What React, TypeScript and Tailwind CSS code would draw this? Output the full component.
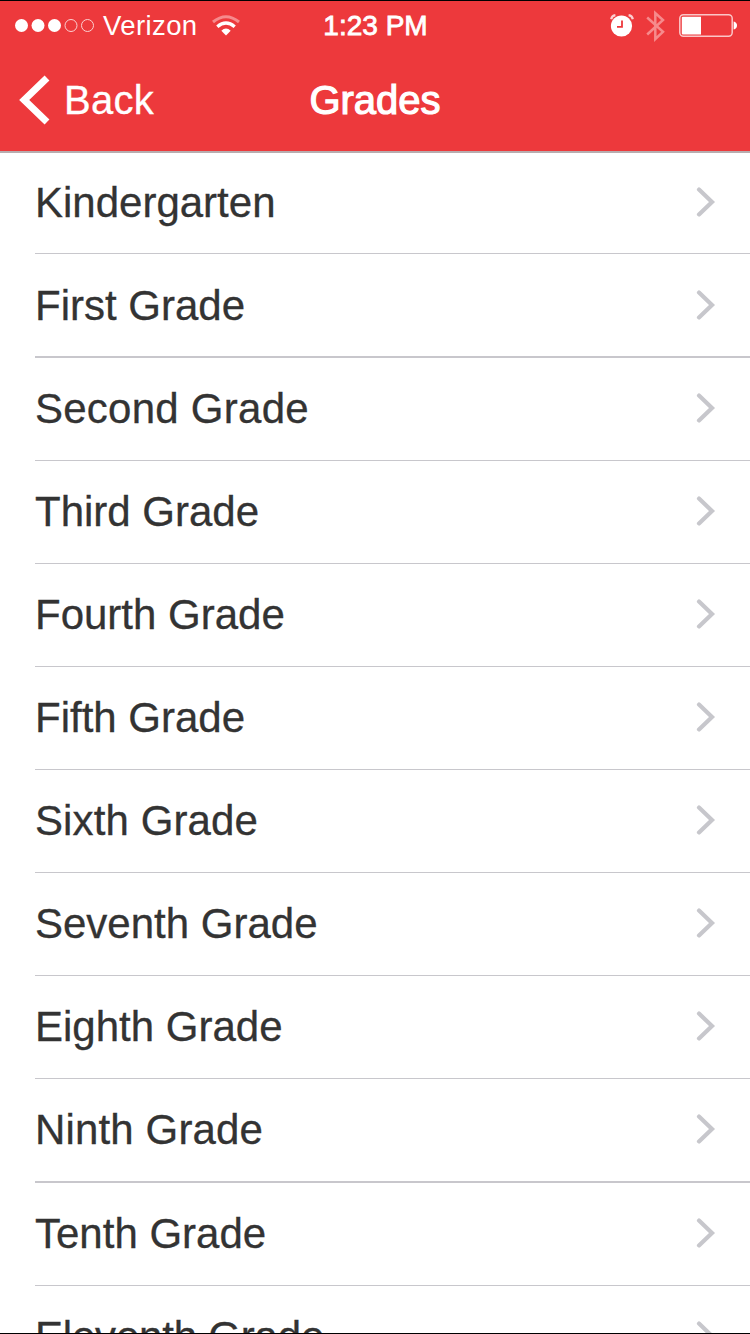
const grades = [
    { name: "Kindergarten", row: "h-[101px] border-b", text: "" },
    { name: "First Grade", row: "h-[104px] border-b-2 pt-px", text: "" },
    { name: "Second Grade", row: "h-[103px] border-b", text: "tracking-[0.25px]" },
    { name: "Third Grade", row: "h-[103px] border-b", text: "" },
    { name: "Fourth Grade", row: "h-[103px] border-b", text: "" },
    { name: "Fifth Grade", row: "h-[103px] border-b", text: "" },
    { name: "Sixth Grade", row: "h-[103px] border-b", text: "tracking-[0.1px]" },
    { name: "Seventh Grade", row: "h-[103px] border-b", text: "" },
    { name: "Eighth Grade", row: "h-[103px] border-b", text: "" },
    { name: "Ninth Grade", row: "h-[104px] border-b-2", text: "tracking-[0.15px]" },
    { name: "Tenth Grade", row: "h-[103px] border-b", text: "" },
    { name: "Eleventh Grade", row: "h-[103px] border-b", text: "tracking-[-0.2px]" },
]

const Signal = () => (
    <svg className="ml-[15px]" width="80" height="14" viewBox="0 0 80 14" fill="none">
        <circle cx="6.5" cy="6.5" r="6.5" fill="#fff" />
        <circle cx="23" cy="6.5" r="6.5" fill="#fff" />
        <circle cx="39.5" cy="6.5" r="6.5" fill="#fff" />
        <circle cx="56" cy="6.5" r="6" stroke="#fbd0d1" />
        <circle cx="72.5" cy="6.5" r="6" stroke="#fbd0d1" />
    </svg>
)

const Wifi = () => (
    <svg className="ml-[14px]" width="28" height="22" viewBox="0 0 28 22" fill="none">
        <path d="M1 7 Q14 -3.6 27 7" stroke="#f68a8c" strokeWidth="3" />
        <path d="M5.3 11.7 Q14 4.4 22.7 11.7" stroke="#fff" strokeWidth="3.4" />
        <path d="M9.3 15.8 Q14 11 18.7 15.8 L14 20.6 Z" fill="#fff" />
    </svg>
)

const Alarm = () => (
    <svg className="mb-[2px]" width="24" height="24" viewBox="0 0 24 24" fill="none">
        <path d="M1.2 6.2 Q1.8 2.8 5.4 2.2 M18.6 2.2 Q22.2 2.8 22.8 6.2" stroke="#fbd0d1" strokeWidth="2.2" />
        <circle cx="11.5" cy="13" r="10.6" fill="#fff" />
        <path d="M12 7.5 V13.8 H7" stroke="#ed393c" strokeWidth="1.8" />
    </svg>
)

const Bluetooth = () => (
    <svg className="ml-[12px]" width="20" height="32" viewBox="0 0 20 32" fill="none">
        <path d="M1.2 7.5 L17 21.8 L9.3 29 V3 L17 10 L1.2 24.5" stroke="#f68a8c" strokeWidth="2.5" />
    </svg>
)

const Battery = () => (
    <svg className="ml-[13px]" width="58" height="24" viewBox="0 0 58 24" fill="none">
        <rect x="0.8" y="0.8" width="52.4" height="21.4" rx="3.6" stroke="#fbc6c7" strokeWidth="1.5" />
        <path d="M3.8 2.8 H22 V20.4 H3.8 Q2.8 20.4 2.8 19.4 V3.8 Q2.8 2.8 3.8 2.8 Z" fill="#fff" />
        <path d="M54.6 7.6 Q58 8.4 58 11.6 Q58 14.8 54.6 15.6 Z" fill="#fff" />
    </svg>
)

const Chevron = () => (
    <svg className="mr-[34px] mb-[2px]" width="20" height="30" viewBox="0 0 20 30" fill="none">
        <path d="M3 2.6 L16 15 L3 27.4" stroke="#c7c7cc" strokeWidth="4.2" strokeLinecap="round" />
    </svg>
)

const Header = () => {
    return (
        <header className="h-[153px] shrink-0 bg-[#ed393c] border-t border-t-black border-b-2 border-b-[#b8adaf] text-white">
            <div className="h-[49px] grid grid-cols-[1fr_auto_1fr] items-center">
                <div className="flex items-center">
                    <Signal />
                    <span className="ml-[8px] text-[27.5px] tracking-[0.4px] leading-none">Verizon</span>
                    <Wifi />
                </div>
                <span className="pt-px pl-px text-[28px] leading-none [-webkit-text-stroke:0.8px_white]">1:23 PM</span>
                <div className="flex items-center justify-end pr-[13px]">
                    <Alarm />
                    <Bluetooth />
                    <Battery />
                </div>
            </div>
            <nav className="h-[101px] grid grid-cols-[1fr_auto_1fr] items-center">
                <a className="flex items-center">
                    <svg className="ml-[19px] mb-[2px]" width="31" height="50" viewBox="0 0 31 50" fill="none">
                        <path d="M28 3 L5.2 25 L28 47" stroke="#fff" strokeWidth="7" strokeLinejoin="miter" />
                    </svg>
                    <span className="ml-[14px] mb-[2px] text-[40px] tracking-[0.3px] leading-none [-webkit-text-stroke:0.3px_white]">Back</span>
                </a>
                <h1 className="mb-[2px] text-[40px] leading-none [-webkit-text-stroke:1.2px_white]">Grades</h1>
                <span />
            </nav>
        </header>
    )
}

const App = () => {
    return (
        <div className="h-[1334px] w-[750px] flex flex-col overflow-hidden bg-white border-b border-black font-['Liberation_Sans',Arial,sans-serif]">
            <Header />
            <ul className="pl-[35px]">
                {grades.map((grade) => (
                    <li key={grade.name} className={`flex items-center justify-between border-[#c8c7cc] ${grade.row}`}>
                        <span className={`text-[42px] leading-none text-[#333333] [-webkit-text-stroke:0.3px_#333333] ${grade.text}`}>{grade.name}</span>
                        <Chevron />
                    </li>
                ))}
            </ul>
        </div>
    )
}

export default App
